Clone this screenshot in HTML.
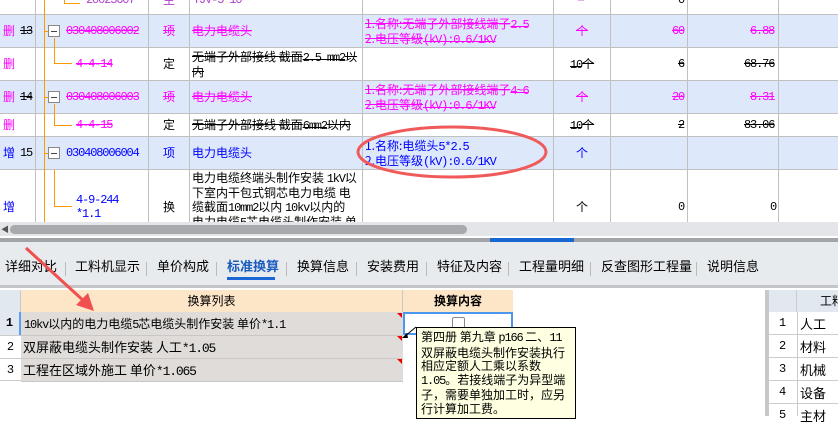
<!DOCTYPE html><html><head><meta charset="utf-8"><style>
*{margin:0;padding:0;box-sizing:border-box}
body{width:838px;height:416px;overflow:hidden;background:#fff;font-family:"Noto Sans CJK SC",sans-serif;font-size:12px;line-height:14px;position:relative}
.n{font-family:"Liberation Mono",monospace;font-size:12px;letter-spacing:-1.15px}
.a{position:absolute;white-space:nowrap}
.r{position:absolute;left:0;width:838px;border-bottom:1px solid #c0c0c0}
.bl{background:#dde9fb}
.v{position:absolute;top:0;width:1px;background:#c0c0c0;height:222px}
.m{color:#f0f;text-decoration:line-through}
.b{color:#00f}
.s{text-decoration:line-through}
.box{position:absolute;left:48px;width:12px;height:12px;border:1px solid #888;background:#fff}
.box:after{content:"";position:absolute;left:2px;top:5px;width:6px;height:1px;background:#444}
.h{position:absolute;height:1px;background:#f90}
.t{font-size:13px;line-height:16px}
</style></head><body>
<div class="r" style="top:0;height:15px"></div>
<div class="r bl" style="top:15px;height:33px"></div>
<div class="r" style="top:48px;height:33px"></div>
<div class="r bl" style="top:81px;height:33px"></div>
<div class="r" style="top:114px;height:23px"></div>
<div class="r bl" style="top:137px;height:33px"></div>
<div class="v" style="left:35px"></div><div class="v" style="left:148px"></div><div class="v" style="left:189px"></div><div class="v" style="left:362px"></div><div class="v" style="left:553px"></div><div class="v" style="left:610px"></div><div class="v" style="left:687px"></div><div class="v" style="left:778px"></div>
<div style="position:absolute;left:44px;top:0;width:1px;height:222px;background:#f90"></div>
<div style="position:absolute;left:54px;top:38px;width:1px;height:25px;background:#f90"></div>
<div style="position:absolute;left:54px;top:104px;width:1px;height:21px;background:#f90"></div>
<div style="position:absolute;left:54px;top:170px;width:1px;height:37px;background:#f90"></div>
<div class="h" style="left:54px;top:63px;width:18px"></div>
<div class="h" style="left:54px;top:125px;width:18px"></div>
<div class="h" style="left:54px;top:206px;width:18px"></div>
<div class="h" style="left:44px;top:31px;width:4px"></div><div class="h" style="left:44px;top:97px;width:4px"></div><div class="h" style="left:44px;top:153px;width:4px"></div>
<div style="position:absolute;left:64px;top:0;width:1px;height:3px;background:#f90"></div><div class="h" style="left:64px;top:3px;width:16px"></div>
<div class="box" style="top:25px"></div><div class="box" style="top:91px"></div><div class="box" style="top:147px"></div>
<!-- row 0 -->
<div class="a n" style="left:86px;top:-7px;color:#b040d0">20023607</div>
<div class="a" style="left:163px;top:-7px;color:#b040d0">主</div>
<div class="a n" style="left:193px;top:-7px;color:#b040d0">YJV-5*10</div>
<div class="a n" style="left:578px;top:-7px;color:#b040d0;font-size:10px">m</div>
<div class="a n" style="left:678px;top:-7px">0</div>
<!-- row 13 -->
<div class="a" style="left:3px;top:24px;color:#f0f">删</div><div class="a s n" style="left:20px;top:24px">13</div>
<div class="a m n" style="left:66px;top:24px">030408006002</div>
<div class="a m" style="left:163px;top:24px">项</div>
<div class="a m" style="left:192px;top:24px">电力电缆头</div>
<div class="a m" style="left:365px;top:17px">1.名称:无端子外部接线端子<span class="n">2.5</span><br>2.电压等级<span class="n">(kV):0.6/1KV</span></div>
<div class="a m" style="left:576px;top:24px">个</div>
<div class="a m n" style="left:672px;top:24px">60</div><div class="a m n" style="left:750px;top:24px">6.88</div>
<!-- 4-4-14 -->
<div class="a" style="left:3px;top:57px;color:#f0f">删</div>
<div class="a m n" style="left:76px;top:57px">4-4-14</div>
<div class="a" style="left:163px;top:57px">定</div>
<div class="a s" style="left:192px;top:50px">无端子外部接线 截面<span class="n">2.5 mm2</span>以<br>内</div>
<div class="a s" style="left:570px;top:57px"><span class="n">10</span>个</div>
<div class="a s n" style="left:678px;top:57px">6</div><div class="a s n" style="left:744px;top:57px">68.76</div>
<!-- 14 -->
<div class="a" style="left:3px;top:90px;color:#f0f">删</div><div class="a s n" style="left:20px;top:90px">14</div>
<div class="a m n" style="left:66px;top:90px">030408006003</div>
<div class="a m" style="left:163px;top:90px">项</div>
<div class="a m" style="left:192px;top:90px">电力电缆头</div>
<div class="a m" style="left:365px;top:83px">1.名称:无端子外部接线端子<span class="n">4~6</span><br>2.电压等级<span class="n">(kV):0.6/1KV</span></div>
<div class="a m" style="left:576px;top:90px">个</div>
<div class="a m n" style="left:672px;top:90px">20</div><div class="a m n" style="left:750px;top:90px">8.31</div>
<!-- 4-4-15 -->
<div class="a" style="left:3px;top:118px;color:#f0f">删</div>
<div class="a m n" style="left:76px;top:118px">4-4-15</div>
<div class="a" style="left:163px;top:118px">定</div>
<div class="a s" style="left:192px;top:118px">无端子外部接线 截面<span class="n">6mm2</span>以内</div>
<div class="a s" style="left:570px;top:118px"><span class="n">10</span>个</div>
<div class="a s n" style="left:678px;top:118px">2</div><div class="a s n" style="left:744px;top:118px">83.06</div>
<!-- 15 -->
<div class="a b" style="left:3px;top:146px">增</div><div class="a n" style="left:20px;top:146px">15</div>
<div class="a b n" style="left:66px;top:146px">030408006004</div>
<div class="a b" style="left:163px;top:146px">项</div>
<div class="a b" style="left:192px;top:146px">电力电缆头</div>
<div class="a b" style="left:365px;top:139px">1.名称:电缆头<span class="n">5*2.5</span><br>2.电压等级<span class="n">(kV):0.6/1KV</span></div>
<div class="a b" style="left:576px;top:146px">个</div>
<!-- row 16 -->
<div class="a b" style="left:3px;top:200px">增</div>
<div class="a b n" style="left:76px;top:193px">4-9-244<br>*1.1</div>
<div class="a" style="left:163px;top:200px">换</div>
<div class="a" style="left:192px;top:171px">电力电缆终端头制作安装 <span class="n">1kV</span>以<br>下室内干包式铜芯电力电缆 电<br>缆截面<span class="n">10mm2</span>以内 <span class="n">10kv</span>以内的<br>电力电缆<span class="n">5</span>芯电缆头制作安装 单</div>
<div class="a" style="left:576px;top:200px">个</div>
<div class="a n" style="left:678px;top:200px">0</div><div class="a n" style="left:770px;top:200px">0</div>
<svg class="a" style="left:355px;top:122px" width="200" height="60"><ellipse cx="97" cy="30" rx="94" ry="25" fill="none" stroke="#f05a5a" stroke-width="3"/></svg>
<!-- scrollbars -->
<div class="a" style="left:0;top:222px;width:838px;height:14px;background:#e4e5e8"></div>
<div class="a" style="left:10px;top:225px;width:457px;height:9px;background:#a8a9ad;border-radius:5px"></div>
<div class="a" style="left:1px;top:223px;font-size:8px;color:#555">◀</div>
<div class="a" style="left:0;top:236px;width:838px;height:2px;background:#fff"></div>
<div class="a" style="left:0;top:238px;width:838px;height:4px;background:#a3a4a8"></div>
<div class="a" style="left:490px;top:238px;width:84px;height:4px;background:#1866d0"></div>
<!-- tabs -->
<div class="a" style="left:0;top:242px;width:838px;height:46px;background:#e8ebee;border-bottom:3px solid #c3c5c8"></div>
<div class="a t" style="top:258px;left:5px">详细对比</div>
<div class="a t" style="top:258px;left:75px">工料机显示</div>
<div class="a t" style="top:258px;left:157px">单价构成</div>
<div class="a t" style="top:258px;left:227px;color:#1a5bbf;font-weight:bold">标准换算</div>
<div class="a" style="top:277px;left:227px;width:48px;height:3px;background:#1a66d6"></div>
<div class="a t" style="top:258px;left:297px">换算信息</div>
<div class="a t" style="top:258px;left:367px">安装费用</div>
<div class="a t" style="top:258px;left:437px">特征及内容</div>
<div class="a t" style="top:258px;left:519px">工程量明细</div>
<div class="a t" style="top:258px;left:601px">反查图形工程量</div>
<div class="a t" style="top:258px;left:707px">说明信息</div>
<div class="a" style="top:262px;left:65px;width:1px;height:14px;background:#bbb"></div>
<div class="a" style="top:262px;left:146px;width:1px;height:14px;background:#bbb"></div>
<div class="a" style="top:262px;left:216px;width:1px;height:14px;background:#bbb"></div>
<div class="a" style="top:262px;left:286px;width:1px;height:14px;background:#bbb"></div>
<div class="a" style="top:262px;left:356px;width:1px;height:14px;background:#bbb"></div>
<div class="a" style="top:262px;left:426px;width:1px;height:14px;background:#bbb"></div>
<div class="a" style="top:262px;left:508px;width:1px;height:14px;background:#bbb"></div>
<div class="a" style="top:262px;left:590px;width:1px;height:14px;background:#bbb"></div>
<div class="a" style="top:262px;left:696px;width:1px;height:14px;background:#bbb"></div>
<!-- lower grid -->
<div class="a" style="left:0;top:290px;width:21px;height:22px;background:#e2e8f0;border-right:1px solid #c8c8c8"></div>
<div class="a" style="left:21px;top:290px;width:382px;height:22px;background:#fde5c8;border-right:1px solid #c8c8c8;text-align:center;line-height:22px">换算列表</div>
<div class="a" style="left:403px;top:290px;width:110px;height:22px;background:#fde5c8;text-align:center;line-height:22px;font-weight:bold">换算内容</div>
<div class="a n" style="left:0;top:312px;width:21px;height:23px;background:#e2e8f0;border-right:2px solid #5aa0f0;text-align:center;line-height:23px;font-weight:bold;letter-spacing:0">1</div>
<div class="a n" style="left:0;top:335px;width:21px;height:23px;text-align:center;line-height:23px;border-top:1px solid #ccc;letter-spacing:0">2</div>
<div class="a n" style="left:0;top:358px;width:21px;height:23px;text-align:center;line-height:23px;border-top:1px solid #ccc;border-bottom:1px solid #ccc;letter-spacing:0">3</div>
<div class="a" style="left:21px;top:312px;width:382px;height:69px;background:#e0dcd9"></div>
<div class="a" style="left:21px;top:335px;width:382px;height:1px;background:#c8c8c8"></div>
<div class="a" style="left:21px;top:358px;width:382px;height:1px;background:#c8c8c8"></div>
<div class="a" style="left:21px;top:381px;width:382px;height:1px;background:#c8c8c8"></div>
<div class="a" style="left:24px;top:316px;line-height:16px"><span class="n">10kv</span>以内的电力电缆<span class="n">5</span>芯电缆头制作安装 单价<span class="n">*1.1</span></div>
<div class="a t" style="left:23px;top:339px">双屏蔽电缆头制作安装 人工<span class="n" style="font-size:13px">*1.05</span></div>
<div class="a t" style="left:23px;top:362px">工程在区域外施工 单价<span class="n" style="font-size:13px">*1.065</span></div>
<div class="a" style="left:397px;top:313px;border-left:5px solid transparent;border-top:5px solid #e00"></div>
<div class="a" style="left:397px;top:336px;border-left:5px solid transparent;border-top:5px solid #e00"></div>
<div class="a" style="left:397px;top:359px;border-left:5px solid transparent;border-top:5px solid #e00"></div>
<div class="a" style="left:403px;top:312px;width:110px;height:23px;border:2px solid #4d96f0"></div>
<div class="a" style="left:452px;top:317px;width:13px;height:13px;border:1px solid #888;border-radius:2px"></div>
<!-- tooltip -->
<svg class="a" style="left:400px;top:325px" width="20" height="15"><line x1="16" y1="2" x2="4" y2="12" stroke="#000"/><path d="M2 13 L7 8 L8 13Z" fill="#000"/></svg>
<div class="a" style="left:416px;top:327px;width:160px;height:92px;background:#ffffe1;border:1px solid #000;padding:2px 4px;white-space:normal;line-height:13.6px;font-size:12px">第四册 第九章 <span class="n">p166</span> 二、<span class="n">11</span>双屏蔽电缆头制作安装执行相应定额人工乘以系数<span class="n">1.05</span>。若接线端子为异型端子，需要单独加工时，应另行计算加工费。</div>
<!-- right panel -->
<div class="a" style="left:765px;top:290px;width:4px;height:126px;background:#c8c8c8"></div>
<div class="a" style="left:769px;top:290px;width:28px;height:22px;background:#e2e8f0;border-right:1px solid #ccc"></div>
<div class="a" style="left:797px;top:290px;width:41px;height:22px;background:#e2e8f0;line-height:22px;padding-left:23px">工料</div>
<div class="a" style="left:769px;top:312px;width:69px;height:104px;background:repeating-linear-gradient(#fff 0 22px,#ccc 22px 23px)"></div>
<div class="a" style="left:797px;top:312px;width:1px;height:104px;background:#ccc"></div>
<div class="a n" style="left:779px;top:312px;line-height:23px;letter-spacing:0">1<br>2<br>3<br>4<br>5</div>
<div class="a" style="left:800px;top:312px;line-height:23px;font-size:13px">人工<br>材料<br>机械<br>设备<br>主材</div>
<svg class="a" style="left:20px;top:245px" width="80" height="70"><line x1="6" y1="3" x2="66" y2="58" stroke="#f05050" stroke-width="3"/><path d="M74 66 L56 60 L68 48Z" fill="#f05050"/></svg>
</body></html>
